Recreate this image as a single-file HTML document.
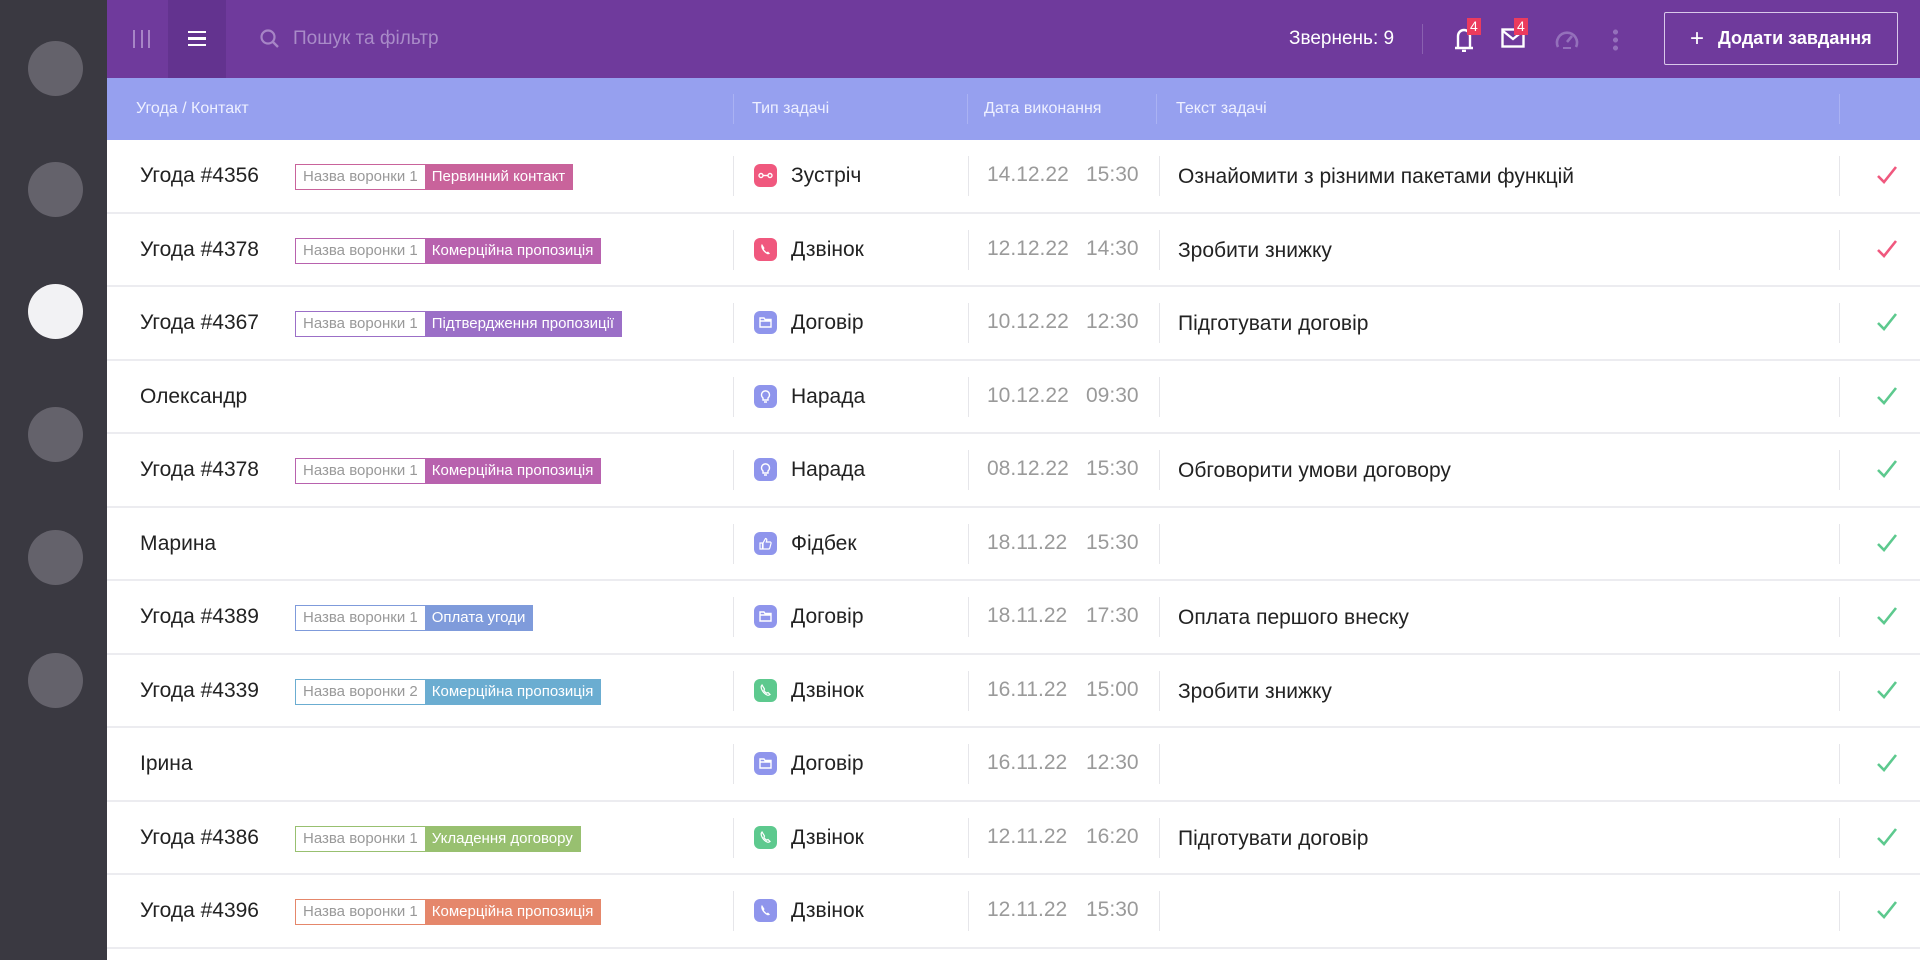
<!DOCTYPE html>
<html><head><meta charset="utf-8"><style>
*{box-sizing:border-box;margin:0;padding:0}
body{width:1920px;height:960px;overflow:hidden;font-family:"Liberation Sans","Noto Sans CJK SC",sans-serif;background:#fff;position:relative}
.side{position:absolute;left:0;top:0;width:107px;height:960px;background:#3a3941}
.side i{position:absolute;left:28px;width:55px;height:55px;border-radius:50%;background:#64626b}
.top{position:absolute;left:107px;top:0;right:0;height:78px;background:#6f3a9c;color:#fff}
.hd{position:absolute;left:107px;top:78px;right:0;height:62px;background:#96a0ef;color:#eef0ff;font-size:16px}
.hd span{position:absolute;top:22px}
.hd b{position:absolute;top:16px;width:1px;height:30px;background:#aab2f3}
.rows{position:absolute;left:107px;top:140px;right:0}
.r{position:relative;height:73.5px;border-bottom:2px solid #ececf0}
.r>*{position:absolute}
.nm{left:33px;top:24px;font-size:21px;color:#222}
.tag{left:188px;top:24px;height:26px;display:flex;font-size:15px;border:1.5px solid;}
.tag .a{background:#fff;color:#999;padding:0 7px;line-height:23px}
.tag .b{color:#fff;padding:0 7px;line-height:23px}
.dv{top:16px;width:1px;height:40px;background:#e6e6ea}
.ic{left:647px;top:24px;width:23px;height:23px;border-radius:6px}
.ty{left:684px;top:24px;font-size:21px;color:#222}
.dt{left:880px;top:23px;font-size:21px;color:#9a9a9a}
.tm{left:979px;top:23px;font-size:21px;color:#9a9a9a}
.tx{left:1071px;top:25px;font-size:21px;color:#222}
.ck{left:1768px;top:23px}
</style></head><body>
<div class="side">
<i style="top:41px"></i><i style="top:162px"></i><i style="top:284px;background:#f2f2f4"></i><i style="top:407px"></i><i style="top:530px"></i><i style="top:653px"></i>
</div>
<div class="top">
<div style="position:absolute;left:26px;top:30px;width:17px;height:18px;border-left:2px solid #a785c6;border-right:2px solid #a785c6"><div style="margin-left:5.5px;width:2px;height:18px;background:#a785c6"></div></div>
<div style="position:absolute;left:61px;top:0;width:58px;height:78px;background:#63338f"></div>
<div style="position:absolute;left:81px;top:31px;width:18px;height:15px;border-top:2.5px solid #fff;border-bottom:2.5px solid #fff"><div style="margin-top:4px;height:2.5px;background:#fff"></div></div>
<svg style="position:absolute;left:152px;top:28px" width="22" height="22" viewBox="0 0 22 22"><circle cx="9" cy="9" r="6.5" stroke="#a785c6" stroke-width="2.2" fill="none"/><path d="M14 14l5 5" stroke="#a785c6" stroke-width="2.4"/></svg>
<div style="position:absolute;left:186px;top:28px;font-size:19px;color:#a98bc8">Пошук та фільтр</div>
<div style="position:absolute;left:1182px;top:28px;font-size:19px">Звернень: 9</div>
<div style="position:absolute;left:1315px;top:24px;width:1px;height:30px;background:#8a60b0"></div>
<svg style="position:absolute;left:1345px;top:26px" width="24" height="26" viewBox="0 0 24 26"><path d="M6 22V10a6 6 0 0 1 12 0v12M3 22h18M10 25h4" stroke="#fff" stroke-width="2.4" fill="none"/></svg>
<div style="position:absolute;left:1360px;top:18px;background:#ec3b5d;font-size:14px;padding:0 3px;line-height:17px">4</div>
<svg style="position:absolute;left:1394px;top:28px" width="24" height="20" viewBox="0 0 24 20"><rect x="1.5" y="1.5" width="21" height="17" stroke="#fff" stroke-width="2.4" fill="none"/><path d="M2 3l10 8 10-8" stroke="#fff" stroke-width="2.4" fill="none"/></svg>
<div style="position:absolute;left:1407px;top:18px;background:#ec3b5d;font-size:14px;padding:0 3px;line-height:17px">4</div>
<svg style="position:absolute;left:1447px;top:27px" width="26" height="24" viewBox="0 0 26 24"><path d="M4 20A10 10 0 1 1 22 20" stroke="#9470bb" stroke-width="2.6" fill="none"/><path d="M13 15l5-6" stroke="#9470bb" stroke-width="2.6"/><path d="M9 21h8" stroke="#9470bb" stroke-width="2"/></svg>
<div style="position:absolute;left:1506px;top:28px;width:5px;height:23px;background:radial-gradient(circle,#9470bb 2.4px,transparent 2.6px) 0 0/5px 8px"></div>
<div style="position:absolute;left:1557px;top:12px;width:234px;height:53px;border:1.5px solid #d9c8ea;border-radius:2px;font-size:18px;font-weight:bold;line-height:50px;padding-left:25px"><span style="font-weight:normal;font-size:24px;vertical-align:-2px;margin-right:14px">+</span>Додати завдання</div>
</div>
<div class="hd">
<span style="left:29px">Угода / Контакт</span><b style="left:626px"></b>
<span style="left:645px">Тип задачі</span><b style="left:860px"></b>
<span style="left:877px">Дата виконання</span><b style="left:1049px"></b>
<span style="left:1069px">Текст задачі</span><b style="left:1732px"></b>
</div>
<div class="rows" id="rows"></div>
<script>
var P='#f0587e',V='#8f95ec',G='#5dc98e';
var icons={
m:'<svg width="23" height="23" viewBox="0 0 23 23"><circle cx="7" cy="11.5" r="2" stroke="#fff" stroke-width="1.4" fill="none"/><circle cx="16" cy="11.5" r="2" stroke="#fff" stroke-width="1.4" fill="none"/><path d="M9 11.5h5" stroke="#fff" stroke-width="1.4"/></svg>',
p:'<svg width="23" height="23" viewBox="0 0 23 23"><path d="M8 6c-1 1-1 3 0 5s3 4 5 5c1 .5 2 .3 3-.5l-2-2-1.3.7c-1-.6-2.2-1.8-2.8-2.8L10.5 10 8 6z" fill="#fff"/></svg>',
pl:'<svg width="23" height="23" viewBox="0 0 23 23"><path d="M8 6c-1 1-1 3 0 5s3 4 5 5c1 .5 2 .3 3-.5l-2-2-1.3.7c-1-.6-2.2-1.8-2.8-2.8L10.5 10 8 6z" stroke="#fff" stroke-width="1.2" fill="none"/></svg>',
f:'<svg width="23" height="23" viewBox="0 0 23 23"><path d="M6 7h4l1 1.5h6v7.5H6z M6 10h11" stroke="#fff" stroke-width="1.4" fill="none"/></svg>',
b:'<svg width="23" height="23" viewBox="0 0 23 23"><path d="M9 13a4 4 0 1 1 5 0v2H9z M10 17h3" stroke="#fff" stroke-width="1.4" fill="none"/></svg>',
l:'<svg width="23" height="23" viewBox="0 0 23 23"><path d="M6 11h2.5v6H6z M9 11l2.5-4.5c1 0 1.5.8 1.2 2L12.3 10H16c.8 0 1.3.7 1 1.5l-1.2 4.5c-.2.6-.7 1-1.3 1H9z" stroke="#fff" stroke-width="1.2" fill="none"/></svg>'};
var d=[
['Угода #4356','1','Первинний контакт','#c9639b',P,'m','Зустріч','14.12.22','15:30','Ознайомити з різними пакетами функцій',P],
['Угода #4378','1','Комерційна пропозиція','#b862ae',P,'p','Дзвінок','12.12.22','14:30','Зробити знижку',P],
['Угода #4367','1','Підтвердження пропозиції','#9b6fc7',V,'f','Договір','10.12.22','12:30','Підготувати договір',G],
['Олександр','','','',V,'b','Нарада','10.12.22','09:30','',G],
['Угода #4378','1','Комерційна пропозиція','#b862ae',V,'b','Нарада','08.12.22','15:30','Обговорити умови договору',G],
['Марина','','','',V,'l','Фідбек','18.11.22','15:30','',G],
['Угода #4389','1','Оплата угоди','#7f9bdb',V,'f','Договір','18.11.22','17:30','Оплата першого внеску',G],
['Угода #4339','2','Комерційна пропозиція','#6badd1',G,'pl','Дзвінок','16.11.22','15:00','Зробити знижку',G],
['Ірина','','','',V,'f','Договір','16.11.22','12:30','',G],
['Угода #4386','1','Укладення договору','#98c070',G,'pl','Дзвінок','12.11.22','16:20','Підготувати договір',G],
['Угода #4396','1','Комерційна пропозиція','#e5876b',V,'p','Дзвінок','12.11.22','15:30','',G]];
var h='';
d.forEach(function(r){
h+='<div class="r"><div class="nm">'+r[0]+'</div>';
if(r[1])h+='<div class="tag" style="border-color:'+r[3]+'"><span class="a">Назва воронки '+r[1]+'</span><span class="b" style="background:'+r[3]+'">'+r[2]+'</span></div>';
h+='<div class="dv" style="left:626px"></div><div class="ic" style="background:'+r[4]+'">'+icons[r[5]]+'</div><div class="ty">'+r[6]+'</div>';
h+='<div class="dv" style="left:861px"></div><div class="dt">'+r[7]+'</div><div class="tm">'+r[8]+'</div>';
h+='<div class="dv" style="left:1052px"></div><div class="tx">'+r[9]+'</div><div class="dv" style="left:1732px"></div>';
h+='<svg class="ck" width="24" height="24" viewBox="0 0 24 24"><path d="M3 13l6 6L21 4" stroke="'+r[10]+'" stroke-width="2.6" fill="none"/></svg></div>';
});
document.getElementById('rows').innerHTML=h;
</script>
</body></html>
